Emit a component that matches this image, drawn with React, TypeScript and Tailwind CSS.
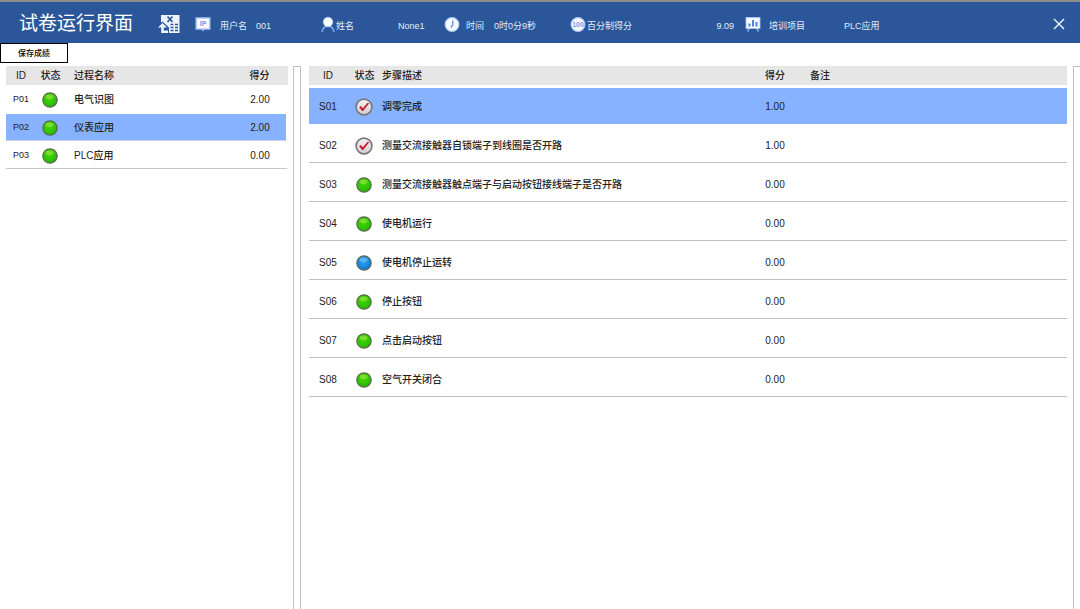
import { useState } from 'react';
import type { ReactNode } from 'react';

type Status = 'green' | 'blue' | 'checked';

interface Process {
  id: string;
  name: string;
  score: string;
}

interface Step {
  id: string;
  status: Status;
  text: string;
  score: string;
}

const PROCESSES: Process[] = [
  { id: 'P01', name: '电气识图', score: '2.00' },
  { id: 'P02', name: '仪表应用', score: '2.00' },
  { id: 'P03', name: 'PLC应用', score: '0.00' },
];

const STEPS: Step[] = [
  { id: 'S01', status: 'checked', text: '调零完成', score: '1.00' },
  { id: 'S02', status: 'checked', text: '测量交流接触器自锁端子到线圈是否开路', score: '1.00' },
  { id: 'S03', status: 'green', text: '测量交流接触器触点端子与启动按钮接线端子是否开路', score: '0.00' },
  { id: 'S04', status: 'green', text: '使电机运行', score: '0.00' },
  { id: 'S05', status: 'blue', text: '使电机停止运转', score: '0.00' },
  { id: 'S06', status: 'green', text: '停止按钮', score: '0.00' },
  { id: 'S07', status: 'green', text: '点击启动按钮', score: '0.00' },
  { id: 'S08', status: 'green', text: '空气开关闭合', score: '0.00' },
];

function Lamp({ status }: { status: Status }) {
  if (status === 'checked') {
    return (
      <svg viewBox="0 0 18 18" className="mx-auto size-[18px]" role="img" aria-label="已完成">
        <defs>
          <linearGradient id="disc" x1="0" y1="0" x2="0" y2="1">
            <stop offset="0" stopColor="#f4f2f3" />
            <stop offset="1" stopColor="#cfcdd0" />
          </linearGradient>
        </defs>
        <circle cx="9" cy="9" r="7.9" fill="url(#disc)" stroke="#77777b" strokeWidth="1.6" />
        <path d="M4.2 9.2 5.8 8 7.8 10.2 12.6 4.8 14.2 5.2 8.2 13 7 13Z" fill="#c4202f" />
      </svg>
    );
  }
  const green = status === 'green';
  return (
    <svg viewBox="0 0 16 16" className="mx-auto size-4" role="img" aria-label={green ? '待完成' : '进行中'}>
      <defs>
        <radialGradient id={`lamp-${status}`} cx="0.45" cy="0.4" r="0.65">
          <stop offset="0" stopColor={green ? '#44d608' : '#2fa2f2'} />
          <stop offset="0.7" stopColor={green ? '#2cc004' : '#1683dd'} />
          <stop offset="1" stopColor={green ? '#209402' : '#0c62b8'} />
        </radialGradient>
      </defs>
      <circle cx="8" cy="8" r="7.2" fill={`url(#lamp-${status})`} stroke="#5f6a55" strokeWidth="1.2" />
      <ellipse cx="7.6" cy="4.8" rx="4" ry="2.4" fill={green ? '#9eea3c' : '#7cc8fa'} opacity="0.6" />
    </svg>
  );
}

function ExportIcon() {
  return (
    <svg viewBox="0 0 22 20" className="h-5 w-[22px]">
      <path d="M3 1h18.5v18H11V13.500L4.500 7.500 3 8.800Z" fill="#eef4fd" />
      <path d="M9.500 2.500 14.500 8M14.500 2.500 9.500 8" stroke="#2b579a" strokeWidth="1.7" />
      <path d="M12.500 10.500h3M17 10.500h3M12.500 13.500h3M17 13.500h3M12.500 16.500h3M17 16.500h3" stroke="#2b579a" strokeWidth="1.3" />
      <path d="M4.500 9 0 13.500h3.200V19H10V16.500H5.800V13.500H9Z" fill="#eef4fd" />
    </svg>
  );
}

function IpIcon() {
  return (
    <svg viewBox="0 0 16 16" className="size-4">
      <rect x="1.2" y="2" width="13.6" height="11" fill="#f7faff" stroke="#a9c8fa" strokeWidth="1.4" />
      <path d="M6.5 13.5h3L8 15.5Z" fill="#a9c8fa" />
      <text x="8" y="10" textAnchor="middle" fontSize="7" fontWeight="700" fill="#6d9cea">
        IP
      </text>
    </svg>
  );
}

function PersonIcon() {
  return (
    <svg viewBox="0 0 16 16" className="size-4">
      <path d="M2 15.8C2.6 12 5 10.2 8 10.2s5.4 1.8 6 5.600" fill="none" stroke="#7fadf4" strokeWidth="1.6" />
      <circle cx="8" cy="6" r="4.8" fill="#f7faff" stroke="#a9c8fa" strokeWidth="0.6" />
    </svg>
  );
}

function ClockIcon() {
  return (
    <svg viewBox="0 0 16 16" className="size-4">
      <circle cx="8" cy="8.5" r="6.9" fill="#f7faff" stroke="#a9c8fa" strokeWidth="1.1" />
      <path d="M8.800 4.500V9L6.800 11.500" fill="none" stroke="#5f8fe0" strokeWidth="1.3" />
    </svg>
  );
}

function HundredIcon() {
  return (
    <svg viewBox="0 0 16 16" className="size-4">
      <circle cx="8" cy="8.5" r="6.9" fill="#f7faff" stroke="#a9c8fa" strokeWidth="1.1" />
      <text x="8" y="11" textAnchor="middle" fontSize="7" fontWeight="700" fill="#6f9fe8">
        100
      </text>
    </svg>
  );
}

function BoardIcon() {
  return (
    <svg viewBox="0 0 16 16" className="size-4">
      <path d="M4.500 12 2.500 15.500M11.500 12l2 3.500" stroke="#7fadf4" strokeWidth="1.6" />
      <rect x="1" y="1.5" width="14" height="11" fill="#f7faff" stroke="#a9c8fa" strokeWidth="0.8" />
      <path d="M4.500 10.500V7.500M8 10.500V4M11.500 10.500V6" stroke="#4f82d8" strokeWidth="2" />
    </svg>
  );
}

function Stat({ icon, label, value, className, gap }: { icon: ReactNode; label: string; value: string; className: string; gap: string }) {
  return (
    <div className={`flex shrink-0 items-center ${className}`}>
      {icon}
      <span className={`flex flex-1 pt-1 ${gap}`}>
        <span>{label}</span>
        <span>{value}</span>
      </span>
    </div>
  );
}

export default function App() {
  const [process, setProcess] = useState('P02');
  const [step, setStep] = useState('S01');

  return (
    <div className="flex h-screen flex-col bg-white font-['Liberation_Sans','Noto_Sans_CJK_SC',sans-serif] text-[10px] leading-4 font-medium text-[#222]">
      <header className="flex h-[43px] shrink-0 items-center border-t-2 border-[#8f8d8c] bg-[#2b579a] pt-[2px] pr-[15px] pl-[19px] text-[9px] font-normal whitespace-nowrap text-[#e4ecf8]">
        <h1 className="w-[139px] shrink-0 text-[19px] leading-6 text-white">试卷运行界面</h1>
        <button type="button" aria-label="导出" className="mr-[15px] shrink-0">
          <ExportIcon />
        </button>
        <Stat icon={<IpIcon />} label="用户名" value="001" className="w-[125px]" gap="ml-[9px] gap-[9px]" />
        <Stat icon={<PersonIcon />} label="姓名" value="None1" className="w-[124px]" gap="gap-11" />
        <Stat icon={<ClockIcon />} label="时间" value="0时0分9秒" className="w-[126px]" gap="ml-[6px] gap-[10px]" />
        <Stat icon={<HundredIcon />} label="百分制得分" value="9.09" className="w-[164px]" gap="ml-px justify-between" />
        <Stat icon={<BoardIcon />} label="培训项目" value="PLC应用" className="ml-[11px]" gap="ml-2 gap-[39px]" />
        <button type="button" aria-label="关闭" className="ml-auto shrink-0">
          <svg viewBox="0 0 12 12" className="size-3" stroke="#fff" strokeWidth="1.3">
            <path d="M1 1l10 10M11 1 1 11" />
          </svg>
        </button>
      </header>

      <div className="mb-[3px] shrink-0">
        <button type="button" className="block h-5 w-[68px] border border-black bg-white pt-[2px] text-[8px] text-black">
          保存成绩
        </button>
      </div>

      <div className="flex min-h-0 flex-1">
        <section className="w-[293px] shrink-0 pr-[5px] pl-[6px]">
          <table className="w-full table-fixed border-separate border-spacing-0">
            <thead>
              <tr className="h-[19px] bg-[#e6e6e6]">
                <th className="w-[30px] p-0 font-medium">ID</th>
                <th className="w-[29px] p-0 font-medium">状态</th>
                <th className="p-0 pl-[9px] text-left font-medium">过程名称</th>
                <th className="w-[57px] p-0 font-medium">得分</th>
              </tr>
            </thead>
            <tbody>
              {PROCESSES.map((p) => {
                const active = p.id === process;
                const cell = `border-t border-b border-t-transparent bg-clip-padding p-0 ${
                  active ? 'border-b-[#c9d3e4] bg-[#86b2ff]' : p.id === 'P03' ? 'border-b-[#c6c6c6]' : 'border-b-transparent'
                }`;
                return (
                  <tr key={p.id} onClick={() => setProcess(p.id)} className="h-7 cursor-pointer">
                    <td className={`${cell} text-center text-[9px]`}>{p.id}</td>
                    <td className={`${cell} pt-[2px] pr-[2px]`}>
                      <Lamp status="green" />
                    </td>
                    <td className={`${cell} pt-[2px] pl-[9px]`}>{p.name}</td>
                    <td className={`${cell} border-r-2 border-r-transparent pt-[2px] pl-[3px] text-center`}>{p.score}</td>
                  </tr>
                );
              })}
            </tbody>
          </table>
        </section>

        <div className="w-2 shrink-0 cursor-col-resize border-x border-t border-[#c0c0c0]" />

        <section className="min-w-0 flex-1 pr-[6px] pl-2">
          <table className="w-full table-fixed border-separate border-spacing-0">
            <thead>
              <tr className="h-[19px] bg-[#e6e6e6]">
                <th className="w-[38px] p-0 font-medium">ID</th>
                <th className="w-[35px] p-0 font-medium">状态</th>
                <th className="p-0 text-left font-medium">步骤描述</th>
                <th className="w-10 p-0 font-medium">得分</th>
                <th className="w-[272px] p-0 pl-[15px] text-left font-medium">备注</th>
              </tr>
            </thead>
            <tbody>
              {STEPS.map((s) => {
                const active = s.id === step;
                const cell = `border-t-[3px] border-b border-t-transparent bg-clip-padding p-0 pt-[3px] ${
                  active ? 'border-b-[#86b2ff] bg-[#86b2ff]' : 'border-b-[#c0c0c0]'
                }`;
                return (
                  <tr key={s.id} onClick={() => setStep(s.id)} className="h-[39px] cursor-pointer">
                    <td className={`${cell} text-center`}>{s.id}</td>
                    <td className={`${cell} pr-[2px]`}>
                      <Lamp status={s.status} />
                    </td>
                    <td className={cell}>{s.text}</td>
                    <td className={`${cell} text-center`}>{s.score}</td>
                    <td className={cell} />
                  </tr>
                );
              })}
            </tbody>
          </table>
        </section>

        <div className="w-[7px] shrink-0 border-t border-l border-[#c0c0c0]" />
      </div>
    </div>
  );
}
